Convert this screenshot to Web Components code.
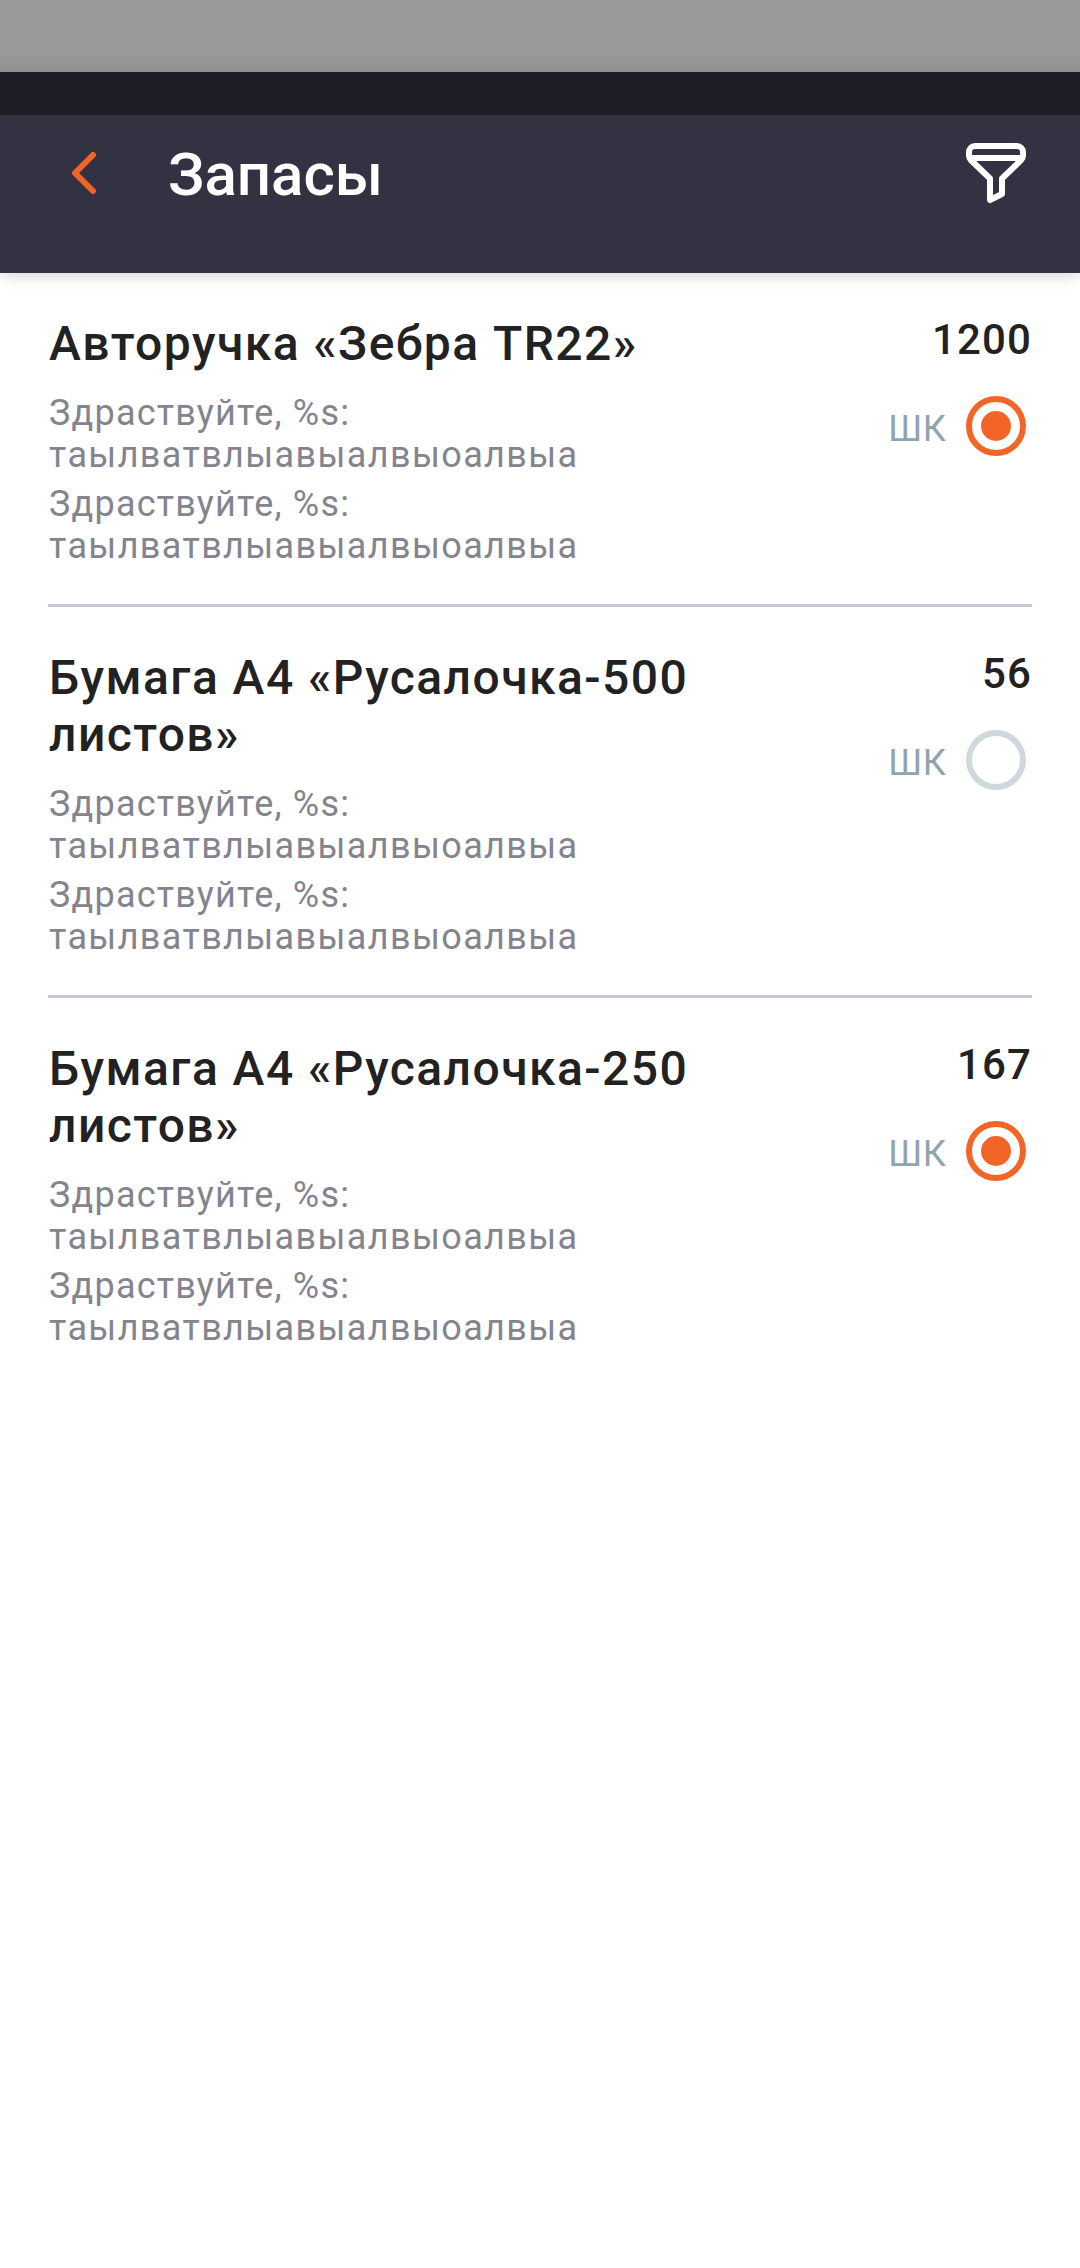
<!DOCTYPE html>
<html lang="ru">
<head>
<meta charset="utf-8">
<title>Запасы</title>
<style>
html, body { margin: 0; background: #fff; }
body { font-family: Roboto, "Liberation Sans", sans-serif; }
</style>
</head>
<body>
<stock-screen></stock-screen>

<template id="t-screen">
  <style>
    :host { display: flex; flex-direction: column; width: 1080px; height: 2268px; background: #fff; overflow: hidden; }
    .status { height: 72px; flex: none; background: linear-gradient(#999 0, #999 54px, #919191 100%); }
    .strip { height: 43px; flex: none; background: #1e1e28; }
    main { display: flex; flex-direction: column; }
  </style>
  <div class="status"></div>
  <div class="strip"></div>
  <stock-header>Запасы</stock-header>
  <main>
    <stock-item count="1200" checked>Авторучка «Зебра TR22»</stock-item>
    <stock-item count="56">Бумага А4 «Русалочка-500 листов»</stock-item>
    <stock-item count="167" checked>Бумага А4 «Русалочка-250 листов»</stock-item>
  </main>
</template>

<template id="t-header">
  <style>
    :host { display: flex; align-items: flex-start; box-sizing: border-box; height: 158px; flex: none; background: #333242; box-shadow: 0 3px 14px rgba(0,0,0,.16); position: relative; padding: 22px 48px 0 48px; }
    svg { display: block; flex: none; }
    .back { margin: 0 48px 0 0; }
    h1 { margin: 3px 0 0; flex: 1; font-weight: 500; font-size: 60px; line-height: 70px; color: #fff; }
  </style>
  <svg class="back" width="72" height="72" viewBox="48 137 72 72" fill="none" stroke="#f26527" stroke-width="6" stroke-linecap="round" stroke-linejoin="round"><path d="M93 155L75 173L93 191"/></svg>
  <h1><slot></slot></h1>
  <svg width="72" height="72" viewBox="960 137 72 72" fill="none" stroke="#fff" stroke-width="6" stroke-linejoin="round"><path d="M990 200V178.5L970.8 160Q969 158.200 969 155.500V152a6 6 0 0 1 6-6H1017a6 6 0 0 1 6 6V155.500Q1023 158.200 1021.200 160L1002 178.500V194Z"/><path d="M969 158H1023"/></svg>
</template>

<template id="t-item">
  <style>
    :host { display: flex; justify-content: space-between; margin: 0 48px; padding: 42px 0 37px; border-bottom: 3px solid #c6c8d5; }
    :host(:last-of-type) { border-bottom: 0; }
    .info { width: 690px; padding-left: 1px; box-sizing: border-box; }
    h2 { margin: 0 0 20px; font-weight: 500; font-size: 48px; line-height: 57px; letter-spacing: 1.44px; color: #222; }
    p { margin: 0 0 7px; width: 560px; font-size: 36px; line-height: 42px; letter-spacing: 1.37px; color: #84848f; }
    p::first-line { letter-spacing: 1.2px; }
    p:last-child { margin: 0; }
    .side { display: flex; flex-direction: column; align-items: flex-end; }
    .count { font-weight: 500; font-size: 42px; line-height: 49px; letter-spacing: 1.1px; color: #222; }
    .code { display: flex; align-items: center; gap: 19.5px; margin: 32px 6px 0 0; font-size: 36px; line-height: 42px; letter-spacing: .6px; color: #90a4ae; }
    .code span { margin-top: 6px; }
  </style>
  <div class="info">
    <h2><slot></slot></h2>
    <p>Здраствуйте, %s: таылватвлыавыалвыоалвыа</p>
    <p>Здраствуйте, %s: таылватвлыавыалвыоалвыа</p>
  </div>
  <div class="side">
    <div class="count"></div>
    <div class="code"><span>ШК</span><stock-radio></stock-radio></div>
  </div>
</template>

<template id="t-radio">
  <style>
    :host { display: flex; align-items: center; justify-content: center; box-sizing: border-box; width: 60px; height: 60px; border: 6px solid #cfd8dc; border-radius: 50%; }
    :host([checked]) { border-color: #f26527; }
    i { display: none; width: 30px; height: 30px; border-radius: 50%; background: #f26527; }
    :host([checked]) i { display: block; }
  </style>
  <i></i>
</template>

<script>
class TemplateElement extends HTMLElement {
  constructor() {
    super();
    this.attachShadow({ mode: 'open' }).append(
      document.getElementById(this.constructor.template).content.cloneNode(true));
  }
}
class StockRadio extends TemplateElement { static template = 't-radio'; }
class StockHeader extends TemplateElement { static template = 't-header'; }
class StockItem extends TemplateElement {
  static template = 't-item';
  connectedCallback() {
    this.shadowRoot.querySelector('.count').textContent = this.getAttribute('count');
    this.shadowRoot.querySelector('stock-radio').toggleAttribute('checked', this.hasAttribute('checked'));
  }
}
class StockScreen extends TemplateElement { static template = 't-screen'; }
customElements.define('stock-radio', StockRadio);
customElements.define('stock-header', StockHeader);
customElements.define('stock-item', StockItem);
customElements.define('stock-screen', StockScreen);
</script>
</body>
</html>
